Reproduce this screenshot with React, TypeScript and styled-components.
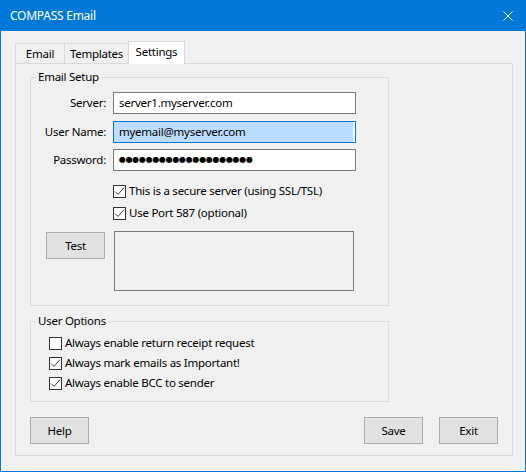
import React from 'react'
import styled, { createGlobalStyle } from 'styled-components'

const GlobalStyle = createGlobalStyle`
  html, body {
    margin: 0;
    padding: 0;
    background: #f0f0f0;
  }
  body {
    font-family: 'Noto Sans', 'Open Sans', sans-serif;
    font-size: 11.5px;
    letter-spacing: -0.25px;
    color: #000;
  }
  * { box-sizing: border-box; }
`

const Window = styled.div`
  width: 526px;
  height: 472px;
  border: 1px solid #0078d7;
  border-top: none;
  background: #f0f0f0;
  display: flex;
  flex-direction: column;
`

const TitleBar = styled.div`
  height: 31px;
  margin: 0 -1px;
  padding: 0 13px 0 10px;
  background: #0078d7;
  color: #fff;
  font-size: 12px;
  display: flex;
  align-items: center;
  justify-content: space-between;
  line-height: 16px;
`

const CloseIcon = () => (
  <svg width="10" height="10" viewBox="0 0 10 10">
    <path d="M0.5 0.5 L9.5 9.5 M9.5 0.5 L0.5 9.5" stroke="#fff" strokeWidth="1" fill="none" />
  </svg>
)

const Body = styled.div`
  flex: 1;
  padding: 10px 0 0 14px;
  display: flex;
  flex-direction: column;
`

const TabStrip = styled.div`
  height: 22px;
  display: flex;
  align-items: flex-end;
`

const Tab = styled.div<{ $active?: boolean; $width: number }>`
  position: relative;
  z-index: ${({ $active }) => ($active ? 2 : 1)};
  width: ${({ $width }) => $width}px;
  height: ${({ $active }) => ($active ? 23 : 20)}px;
  margin-bottom: ${({ $active }) => ($active ? -1 : 0)}px;
  padding-bottom: ${({ $active }) => ($active ? 2 : 0)}px;
  border: 1px solid #d9d9d9;
  border-bottom: none;
  background: ${({ $active }) => ($active ? '#fff' : '#f0f0f0')};
  display: flex;
  align-items: center;
  justify-content: center;
  line-height: 16px;

  & + & {
    margin-left: -1px;
  }
`

const Panel = styled.div`
  width: 498px;
  height: 393px;
  border: 1px solid #d9d9d9;
  padding: 5px 14px 11px 14px;
  display: flex;
  flex-direction: column;
`

const Group = styled.fieldset<{ $gap?: number }>`
  width: 359px;
  margin: ${({ $gap }) => $gap ?? 0}px 0 0 0;
  padding: 0;
  border: 1px solid #dcdcdc;
  min-width: 0;
`

const Legend = styled.legend`
  margin-left: 5px;
  padding: 0 2px;
  line-height: 16px;
`

const SetupBody = styled.div`
  padding: 7px 0 14px 0;
  display: flex;
  flex-direction: column;
`

const FieldRow = styled.div`
  display: grid;
  grid-template-columns: 75px 243px;
  column-gap: 7px;
  align-items: center;

  & + & {
    margin-top: 6.5px;
  }
`

const FieldLabel = styled.label`
  text-align: right;
  line-height: 16px;
`

const TextBox = styled.div<{ $selected?: boolean }>`
  height: 22px;
  border: 1px solid ${({ $selected }) => ($selected ? '#0078d7' : '#7a7a7a')};
  background: ${({ $selected }) => ($selected ? '#bcdcfc' : '#fff')};
  box-shadow: ${({ $selected }) => ($selected ? 'inset -2px 0 0 #fff' : 'none')};
  padding: 0 5px;
  display: flex;
  align-items: center;
  line-height: 16px;
  white-space: nowrap;
  overflow: hidden;
`

const Dots = styled.span`
  font-family: 'DejaVu Sans', sans-serif;
  font-size: 8px;
  letter-spacing: -0.3px;
`

const CheckList = styled.div<{ $indent: number; $gap: number; $top?: number }>`
  margin: ${({ $top }) => $top ?? 0}px 0 0 ${({ $indent }) => $indent}px;
  display: flex;
  flex-direction: column;
  gap: ${({ $gap }) => $gap}px;
`

const CheckRow = styled.label`
  display: flex;
  align-items: center;
  gap: 3px;
  height: 16px;
  line-height: 16px;
  white-space: nowrap;
`

const Box = styled.span`
  width: 13px;
  height: 13px;
  flex: none;
  border: 1px solid #333;
  background: #fff;
  display: flex;
`

const CheckBox = ({ checked, children }: { checked?: boolean; children: React.ReactNode }) => (
  <CheckRow>
    <Box>
      {checked && (
        <svg width="11" height="11" viewBox="0 0 11 11">
          <polyline points="1,5.5 4,8.5 10,1.5" fill="none" stroke="#3c3c3c" strokeWidth="1" />
        </svg>
      )}
    </Box>
    {children}
  </CheckRow>
)

const TestRow = styled.div`
  margin-top: 10px;
  display: grid;
  grid-template-columns: 75px 243px;
  column-gap: 7px;
  align-items: start;
`

const Button = styled.button`
  width: 59px;
  height: 27px;
  padding: 0;
  border: 1px solid #adadad;
  background: #e1e1e1;
  color: #000;
  font: inherit;
  letter-spacing: inherit;
  line-height: 16px;
`

const TestButton = styled(Button)`
  justify-self: end;
  margin: 1px 1px 0 0;
`

const ResultBox = styled.div`
  width: 240px;
  height: 60px;
  margin-left: 1px;
  border: 1px solid #7a7a7a;
  background: #f0f0f0;
`

const OptionsBody = styled.div`
  padding: 6px 0 10px 18px;
`

const ButtonBar = styled.div`
  margin-top: auto;
  display: flex;
  gap: 16px;

  & > :first-child {
    margin-right: auto;
  }
`

export default function App() {
  return (
    <>
      <GlobalStyle />
      <Window>
        <TitleBar>
          <span>COMPASS Email</span>
          <CloseIcon />
        </TitleBar>
        <Body>
          <TabStrip>
            <Tab $width={50}>Email</Tab>
            <Tab $width={65}>Templates</Tab>
            <Tab $width={57} $active>Settings</Tab>
          </TabStrip>
          <Panel>
            <Group>
              <Legend>Email Setup</Legend>
              <SetupBody>
                <FieldRow>
                  <FieldLabel>Server:</FieldLabel>
                  <TextBox>server1.myserver.com</TextBox>
                </FieldRow>
                <FieldRow>
                  <FieldLabel>User Name:</FieldLabel>
                  <TextBox $selected>myemail@myserver.com</TextBox>
                </FieldRow>
                <FieldRow>
                  <FieldLabel>Password:</FieldLabel>
                  <TextBox>
                    <Dots>{'●'.repeat(20)}</Dots>
                  </TextBox>
                </FieldRow>
                <CheckList $indent={82} $gap={6} $top={12}>
                  <CheckBox checked>This is a secure server (using SSL/TSL)</CheckBox>
                  <CheckBox checked>Use Port 587 (optional)</CheckBox>
                </CheckList>
                <TestRow>
                  <TestButton>Test</TestButton>
                  <ResultBox />
                </TestRow>
              </SetupBody>
            </Group>
            <Group $gap={7}>
              <Legend>User Options</Legend>
              <OptionsBody>
                <CheckList $indent={0} $gap={4}>
                  <CheckBox>Always enable return receipt request</CheckBox>
                  <CheckBox checked>Always mark emails as Important!</CheckBox>
                  <CheckBox checked>Always enable BCC to sender</CheckBox>
                </CheckList>
              </OptionsBody>
            </Group>
            <ButtonBar>
              <Button>Help</Button>
              <Button>Save</Button>
              <Button>Exit</Button>
            </ButtonBar>
          </Panel>
        </Body>
      </Window>
    </>
  )
}
